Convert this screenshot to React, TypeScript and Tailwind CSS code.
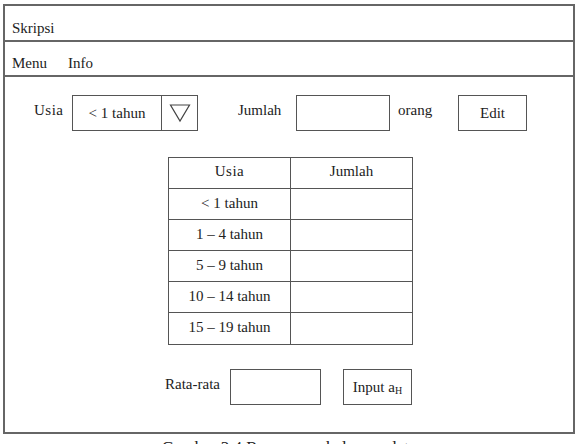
import React from 'react';

const ages = ['< 1 tahun', '1 – 4 tahun', '5 – 9 tahun', '10 – 14 tahun', '15 – 19 tahun'];

const Box = ({ className = '', children }: { className?: string; children?: React.ReactNode }) => (
  <div className={`border border-[#555] bg-white flex items-center justify-center ${className}`}>{children}</div>
);

const App: React.FC = () => {
  return (
    <div className="w-[579px] h-[444px] overflow-hidden bg-white text-[#222] text-[15px] pt-[4px] pl-[3px]" style={{ fontFamily: '"Liberation Serif", "Times New Roman", serif' }}>
      {/* window frame */}
      <div className="w-[572px] h-[430px] border-2 border-[#666] flex flex-col">
        <div className="h-[36px] border-b-2 border-[#666] flex items-center pl-[7px] pt-[10px]">Skripsi</div>
        <div className="h-[35px] border-b-2 border-[#666] flex items-center gap-[21px] pl-[7px] pt-[9px]">
          <span>Menu</span>
          <span>Info</span>
        </div>

        {/* filter row */}
        <div className="flex items-start mt-[18px] h-[36px] whitespace-nowrap">
          <span className="ml-[29px] w-[38px] mt-[4px] tracking-[0.5px]">Usia</span>
          <div className="flex border border-[#555] h-[36px]">
            <div className="w-[89px] flex items-center justify-center border-r border-[#555]">&lt; 1 tahun</div>
            <div className="w-[35px] flex items-center justify-center">
              <svg width="22" height="20" viewBox="0 0 22 20">
                <path d="M1.5 2 L20.5 2 L11 18 Z" fill="none" stroke="#444" strokeWidth="1.2" />
              </svg>
            </div>
          </div>
          <span className="ml-[40px] w-[42px] mt-[4px]">Jumlah</span>
          <Box className="ml-[16px] w-[94px] h-[36px]" />
          <span className="ml-[8px] w-[33px] mt-[4px]">orang</span>
          <Box className="ml-[27px] w-[69px] h-[36px]">Edit</Box>
        </div>

        {/* age table */}
        <div className="ml-[163px] mt-[26px] w-[245px] border border-[#555] grid grid-cols-[122px_1fr]">
          <div className="h-[31px] border-r border-b border-[#555] flex justify-center pt-[2px] tracking-[0.5px]">Usia</div>
          <div className="h-[31px] border-b border-[#555] flex justify-center pt-[2px]">Jumlah</div>
          {ages.map((a, i) => (
            <React.Fragment key={a}>
              <div className={`h-[31px] border-r border-[#555] flex justify-center pt-[3px] ${i < ages.length - 1 ? 'border-b' : ''}`}>{a}</div>
              <div className={`h-[31px] border-[#555] ${i < ages.length - 1 ? 'border-b' : ''}`} />
            </React.Fragment>
          ))}
        </div>

        {/* average row */}
        <div className="flex items-start mt-[24px] h-[36px] whitespace-nowrap">
          <span className="ml-[160px] w-[57px] mt-[4px]">Rata-rata</span>
          <Box className="ml-[8px] w-[91px] h-[36px]" />
          <Box className="ml-[22px] w-[69px] h-[36px]">
            <span>
              Input a<sub className="text-[10px]">H</sub>
            </span>
          </Box>
        </div>
      </div>
      <div className="w-[572px] text-center text-[17px] mt-[1px] whitespace-nowrap">Gambar 3.4 Rancangan halaman data</div>
    </div>
  );
};

export default App;
